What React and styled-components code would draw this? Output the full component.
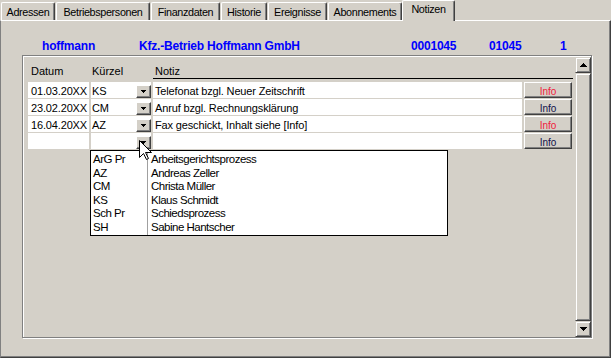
import React from "react"
import styled, { createGlobalStyle } from "styled-components"

const GlobalStyle = createGlobalStyle`
  html, body { margin: 0; padding: 0; background: #d4d0c8; }
  body { font-family: "Liberation Sans", Arial, sans-serif; font-size: 11px; color: #000; }
`

const tabs = [
    { label: "Adressen", w: 54 },
    { label: "Betriebspersonen", w: 94 },
    { label: "Finanzdaten", w: 69 },
    { label: "Historie", w: 46 },
    { label: "Ereignisse", w: 59 },
    { label: "Abonnements", w: 74 },
    { label: "Notizen", w: 53, active: true },
]

const notes = [
    { datum: "01.03.20XX", kuerzel: "KS", notiz: "Telefonat bzgl. Neuer Zeitschrift", red: true },
    { datum: "23.02.20XX", kuerzel: "CM", notiz: "Anruf bzgl. Rechnungsklärung", red: false },
    { datum: "16.04.20XX", kuerzel: "AZ", notiz: "Fax geschickt, Inhalt siehe [Info]", red: true },
    { datum: "", kuerzel: "", notiz: "", red: false },
]

const options = [
    ["ArG Pr", "Arbeitsgerichtsprozess"],
    ["AZ", "Andreas Zeller"],
    ["CM", "Christa Müller"],
    ["KS", "Klaus Schmidt"],
    ["Sch Pr", "Schiedsprozess"],
    ["SH", "Sabine Hantscher"],
]

export default function App() {
    return (
        <Window>
            <GlobalStyle />
            <TabStrip>
                {tabs.map(t => (
                    <Tab key={t.label} $w={t.w} $active={t.active}>{t.label}</Tab>
                ))}
            </TabStrip>
            <Panel>
                <InfoLine>
                    <InfoText>hoffmann</InfoText>
                    <InfoText>Kfz.-Betrieb Hoffmann GmbH</InfoText>
                    <InfoText>0001045</InfoText>
                    <InfoText>01045</InfoText>
                    <InfoText>1</InfoText>
                </InfoLine>
                <GroupFrame>
                    <Main>
                        <ColHeader>
                            <HeadLabel $pad={3}>Datum</HeadLabel>
                            <HeadLabel $pad={1}>Kürzel</HeadLabel>
                            <HeadLabel $pad={2} $rule>Notiz</HeadLabel>
                        </ColHeader>
                        <Rows>
                            {notes.map((n, i) => (
                                <React.Fragment key={i}>
                                    <Cell $pad={3}>{n.datum}</Cell>
                                    <ComboCell>
                                        <ComboText>{n.kuerzel}</ComboText>
                                        <ComboButton>
                                            <svg width="5" height="3" shapeRendering="crispEdges">
                                                <rect x="0" y="0" width="5" height="1" fill="#000" />
                                                <rect x="1" y="1" width="3" height="1" fill="#000" />
                                                <rect x="2" y="2" width="1" height="1" fill="#000" />
                                            </svg>
                                        </ComboButton>
                                    </ComboCell>
                                    <Cell $pad={2}>{n.notiz}</Cell>
                                    <InfoButton $red={n.red}>Info</InfoButton>
                                </React.Fragment>
                            ))}
                            <DropList>
                                {options.map(([code, name]) => (
                                    <ListRow key={code}>
                                        <ListCode>{code}</ListCode>
                                        <ListName>{name}</ListName>
                                    </ListRow>
                                ))}
                            </DropList>
                        </Rows>
                    </Main>
                    <ScrollBar>
                        <ScrollButton>
                            <svg width="7" height="4" shapeRendering="crispEdges">
                                <rect x="3" y="0" width="1" height="1" fill="#000" />
                                <rect x="2" y="1" width="3" height="1" fill="#000" />
                                <rect x="1" y="2" width="5" height="1" fill="#000" />
                                <rect x="0" y="3" width="7" height="1" fill="#000" />
                            </svg>
                        </ScrollButton>
                        <ScrollThumb />
                        <ScrollButton>
                            <svg width="7" height="4" shapeRendering="crispEdges">
                                <rect x="0" y="0" width="7" height="1" fill="#000" />
                                <rect x="1" y="1" width="5" height="1" fill="#000" />
                                <rect x="2" y="2" width="3" height="1" fill="#000" />
                                <rect x="3" y="3" width="1" height="1" fill="#000" />
                            </svg>
                        </ScrollButton>
                    </ScrollBar>
                </GroupFrame>
            </Panel>
            <Cursor width="13" height="21" viewBox="0 0 13 21">
                <path d="M0.5 0.5 L0.5 17.5 L4.5 13.5 L7.5 19.5 L9.5 18.5 L6.5 12.5 L12.5 12.5 Z" fill="#fff" stroke="#000" strokeWidth="1" />
            </Cursor>
        </Window>
    )
}

const Window = styled.div`
position: relative;
width: 611px;
height: 358px;
display: flex;
flex-direction: column;
background: #d4d0c8;
overflow: hidden;
`
const TabStrip = styled.div`
position: relative;
z-index: 1;
display: flex;
align-items: flex-end;
gap: 1px;
height: 20px;
padding-left: 1px;
`
const Tab = styled.div`
box-sizing: border-box;
width: ${p => p.$w}px;
height: ${p => p.$active ? 21 : 18}px;
margin-bottom: ${p => p.$active ? -1 : 0}px;
margin-left: ${p => p.$active ? -1 : 0}px;
padding-top: ${p => p.$active ? 1 : 2}px;
border-top: 1px solid #fff;
border-left: 1px solid #fff;
border-right: 1px solid #404040;
box-shadow: inset -1px 0 0 #808080;
border-radius: 2px 2px 0 0;
background: #d4d0c8;
text-align: center;
font-size: 10.8px;
letter-spacing: -0.35px;
line-height: 14px;
white-space: nowrap;
`
const Panel = styled.div`
flex: 1;
box-sizing: border-box;
border-top: 1px solid #fff;
border-left: 1px solid #808080;
border-right: 1px solid #404040;
border-bottom: 1px solid #404040;
box-shadow: inset -1px -1px 0 #808080;
padding: 18px 0 0 21px;
`
const InfoLine = styled.div`
display: grid;
grid-template-columns: 97px 272px 78px 71px auto;
height: 14px;
padding-left: 20px;
margin-bottom: 2px;
`
const InfoText = styled.span`
color: #0000ff;
font-weight: bold;
font-size: 12px;
letter-spacing: -0.2px;
line-height: 15px;
white-space: nowrap;
`
const GroupFrame = styled.div`
box-sizing: border-box;
width: 570px;
height: 283px;
display: flex;
padding-top: 1px;
border: 1px solid #808080;
box-shadow: inset 1px 1px 0 #fff, 1px 1px 0 #fff;
`
const Main = styled.div`
flex: 1;
padding-left: 5px;
`
const ColHeader = styled.div`
display: grid;
grid-template-columns: 61px 60px 369px 48px;
column-gap: 2px;
margin-bottom: 3px;
`
const HeadLabel = styled.div`
box-sizing: border-box;
height: 22px;
display: flex;
align-items: flex-end;
padding-left: ${p => p.$pad}px;
line-height: 14px;
border-bottom: 1px solid ${p => p.$rule ? "#000" : "transparent"};
grid-column: ${p => p.$rule ? "span 2" : "auto"};
margin-right: ${p => p.$rule ? -1 : 0}px;
`
const Rows = styled.div`
position: relative;
display: grid;
grid-template-columns: 61px 60px 369px 48px;
grid-auto-rows: 16px;
column-gap: 2px;
row-gap: 1px;
`
const Cell = styled.div`
box-sizing: border-box;
background: #fff;
padding: 2px 0 0 ${p => p.$pad}px;
line-height: 14px;
letter-spacing: -0.15px;
white-space: nowrap;
overflow: hidden;
`
const ComboCell = styled.div`
box-sizing: border-box;
background: #fff;
display: flex;
justify-content: space-between;
padding-left: 1px;
`
const ComboText = styled.span`
padding-top: 2px;
line-height: 14px;
letter-spacing: -0.15px;
`
const ComboButton = styled.div`
box-sizing: border-box;
align-self: flex-end;
width: 15px;
height: 13px;
display: flex;
align-items: center;
justify-content: center;
background: #d4d0c8;
border: 1px solid;
border-color: #fff #404040 #404040 #fff;
box-shadow: inset -1px -1px 0 #808080;
`
const InfoButton = styled.div`
box-sizing: border-box;
height: 16px;
padding-top: 3px;
background: #d4d0c8;
border: 1px solid;
border-color: #fff #404040 #404040 #fff;
box-shadow: inset -1px -1px 0 #808080;
text-align: center;
font-size: 10px;
line-height: 11px;
color: ${p => p.$red ? "#f0203a" : "#10104a"};
`
const DropList = styled.div`
position: absolute;
left: 62px;
top: 68px;
z-index: 2;
box-sizing: border-box;
width: 358px;
height: 86px;
padding-top: 2px;
background: #fff;
border: 1px solid #000;
`
const ListRow = styled.div`
display: grid;
grid-template-columns: 57px 1fr;
height: 13.6px;
line-height: 13.6px;
font-size: 11.5px;
letter-spacing: -0.5px;
white-space: nowrap;
`
const ListCode = styled.div`
box-sizing: border-box;
padding-left: 2px;
border-right: 1px solid #a0a0a0;
`
const ListName = styled.div`
padding-left: 3px;
`
const ScrollBar = styled.div`
width: 16px;
display: flex;
flex-direction: column;
`
const ScrollPiece = styled.div`
box-sizing: border-box;
border: 1px solid;
border-color: #d4d0c8 #404040 #404040 #d4d0c8;
box-shadow: inset 1px 1px 0 #fff, inset -1px -1px 0 #808080;
background: #d4d0c8;
`
const ScrollButton = styled(ScrollPiece)`
height: 16px;
display: flex;
align-items: center;
justify-content: center;
`
const ScrollThumb = styled(ScrollPiece)`
flex: 1;
`
const Cursor = styled.svg`
position: absolute;
left: 139px;
top: 140px;
z-index: 5;
`
